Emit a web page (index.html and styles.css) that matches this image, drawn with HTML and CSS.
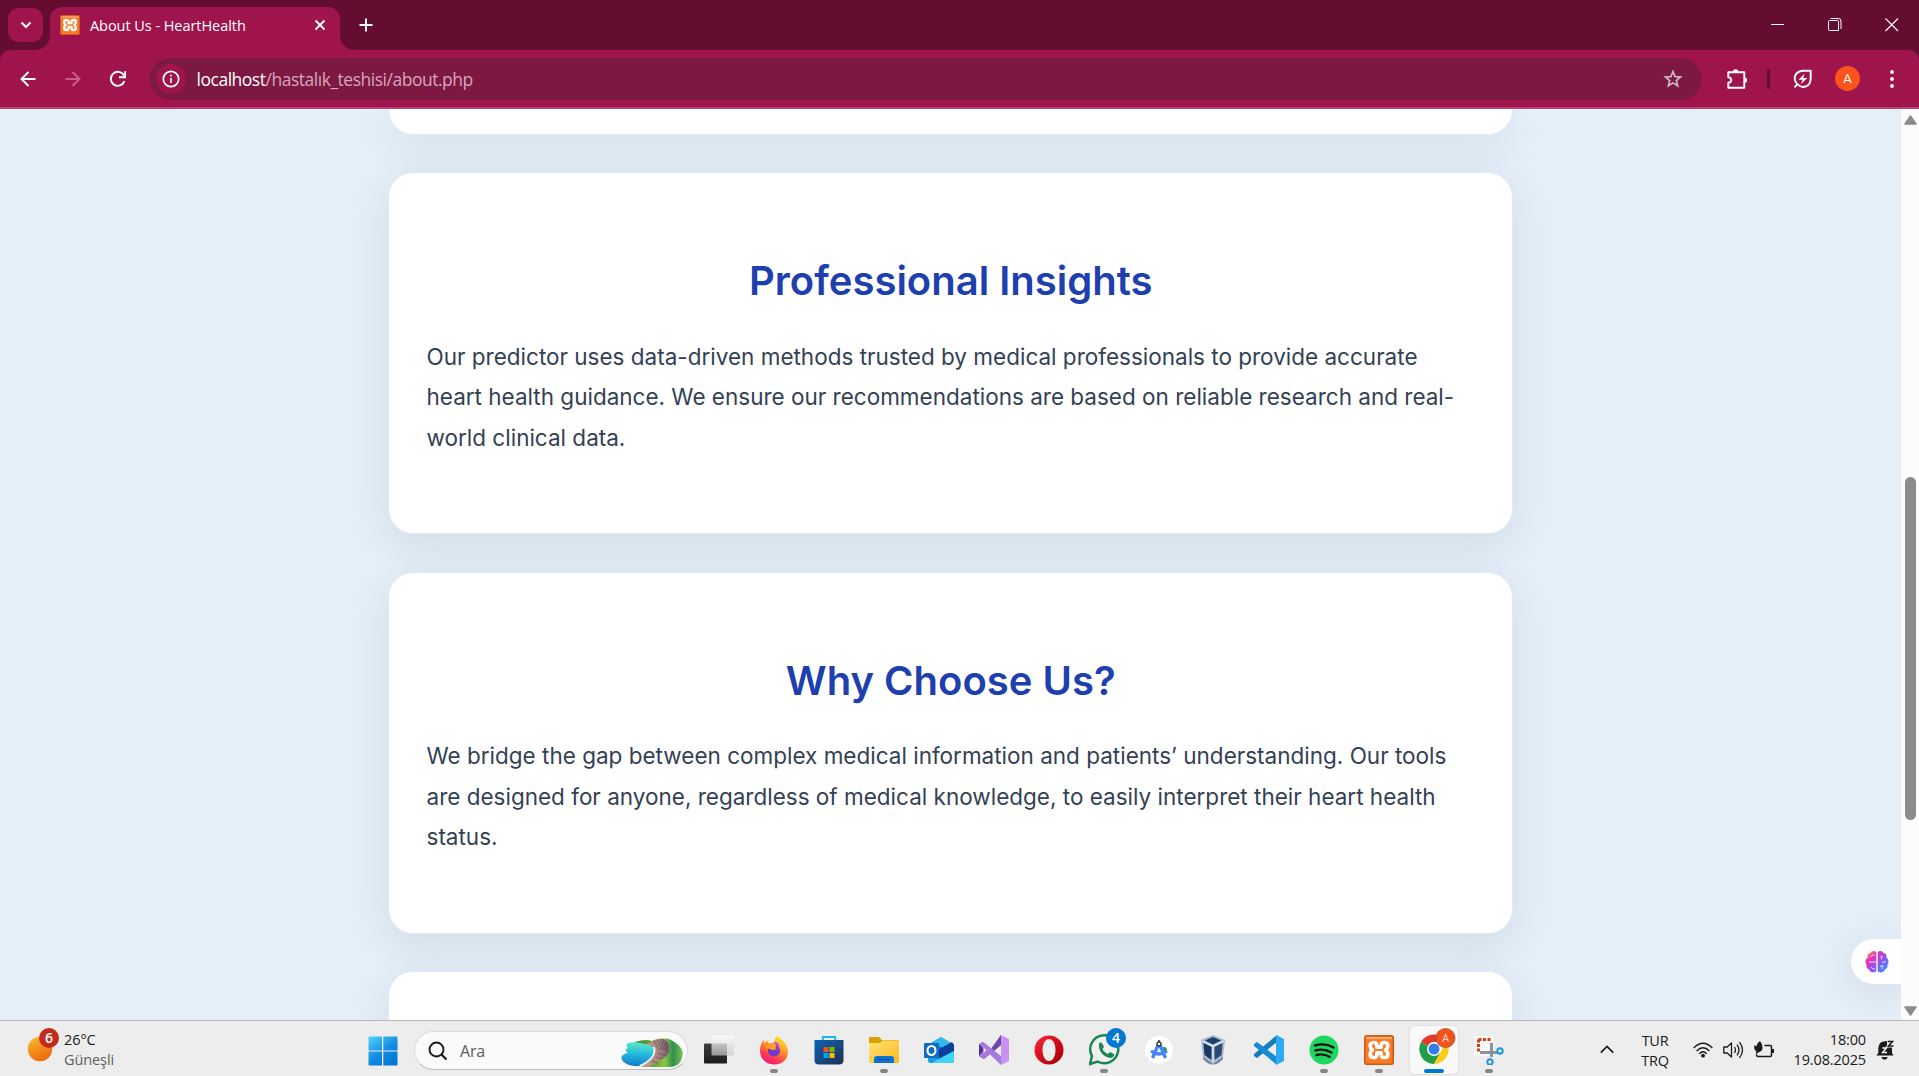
FILE: index.html
```html
<!DOCTYPE html>
<html lang="en">
<head>
<meta charset="utf-8">
<title>About Us - HeartHealth</title>
<link rel="stylesheet" href="styles.css">
</head>
<body>
<header class="browser">
  <div class="tabstrip">
    <button class="tab-search" aria-label="Search tabs"><svg width="12" height="8" viewBox="0 0 12 8"><path d="M1.500 1.500 6 6l4.500-4.500" fill="none" stroke="#fff" stroke-width="2"/></svg></button>
    <div class="tab">
      <svg class="favicon" width="20" height="20" viewBox="0 0 30 30"><use href="#xampp"/></svg>
      <span class="tab-title">About Us - HeartHealth</span>
      <svg class="tab-close" width="12" height="12" viewBox="0 0 12 12"><path d="M1.500 1.500l9 9M10.500 1.500l-9 9" stroke="#fff" stroke-width="1.800"/></svg>
    </div>
    <svg class="new-tab" width="14" height="14" viewBox="0 0 14 14"><path d="M7 .5v13M.5 7h13" stroke="#fff" stroke-width="1.900"/></svg>
    <div class="window-controls">
      <svg width="14" height="14" viewBox="0 0 14 14"><path d="M0 6.500h13" stroke="#fff"/></svg>
      <svg width="14" height="14" viewBox="0 0 14 14"><path d="M.5 3.500q0-1 1-1h8q1 0 1 1v9h-9q-1 0-1-1z" fill="none" stroke="#fff"/><path d="M2.500 .5h8q2.500 0 2.500 2.500v8" fill="none" stroke="#fff"/></svg>
      <svg width="14" height="14" viewBox="0 0 14 14"><path d="M.5 .5l12.500 12.500M13 .5L.5 13" stroke="#fff" stroke-width="1.100"/></svg>
    </div>
  </div>
  <div class="toolbar">
    <svg class="nav back" width="16" height="16" viewBox="0 0 16 16"><path d="M15.500 8H2M8.500 1 1.500 8l7 7" fill="none" stroke="#fff" stroke-width="1.900"/></svg>
    <svg class="nav forward" width="16" height="16" viewBox="0 0 16 16"><path d="M.5 8H14M7.500 1l7 7-7 7" fill="none" stroke="#c9608c" stroke-width="1.900"/></svg>
    <svg class="nav reload" width="18" height="18" viewBox="0 0 18 18"><path d="M15.400 11.200A7 7 0 1 1 15 5.500" fill="none" stroke="#fff" stroke-width="1.900"/><path d="M16.100 1.200v6H10" fill="none" stroke="#fff" stroke-width="1.900"/></svg>
    <div class="omnibox">
      <span class="site-info"><svg width="18" height="18" viewBox="0 0 18 18"><circle cx="9" cy="9" r="7.700" fill="none" stroke="#fff" stroke-width="1.700"/><path d="M9 8v5M9 4.700v1.800" stroke="#fff" stroke-width="1.600"/></svg></span>
      <span class="url"><b>localhost</b>/hastalık_teshisi/about.php</span>
      <svg class="star" width="20" height="20" viewBox="0 0 20 20"><path d="M10 2.500l2.050 5.100 5.500.4-4.250 3.500 1.350 5.300L10 13.900l-4.650 2.900 1.350-5.300L2.450 8l5.500-.4z" fill="none" stroke="#cfb6c4" stroke-width="1.700"/></svg>
    </div>
    <svg class="puzzle" width="22" height="22" viewBox="0 0 22 22"><path d="M3 4.300h15.300v15.500H2.300v-5c4-.5 4-5 0-5.500V4.300z" fill="none" stroke="#fff" stroke-width="1.900" stroke-linejoin="round"/><path d="M6.900 4a2.800 2.800 0 0 1 5.600 0zM18.500 9.400a2.600 2.600 0 0 1 0 5.300z" fill="#fff"/></svg>
    <i class="divider"></i>
    <svg class="leaf" width="20" height="20" viewBox="0 0 20 20"><path d="M1.500 18.300l2.700-3C-1 9 2.500 1.800 11 1.800h6.700V9c0 9-8 11.500-13.300 6.200" fill="none" stroke="#fff" stroke-width="1.900" stroke-linejoin="round"/><path d="M11.500 4.700 5.500 10.700h4L8 15l6.300-6h-4.200z" fill="#fff"/></svg>
    <span class="avatar">A</span>
    <svg class="menu-dots" width="4" height="18" viewBox="0 0 4 18"><g fill="#fff"><circle cx="2" cy="2" r="1.900"/><circle cx="2" cy="9" r="1.900"/><circle cx="2" cy="16" r="1.900"/></g></svg>
  </div>
</header>

<div class="viewport">
  <main class="page">
    <section class="card card-leaving"></section>
    <section class="card">
      <h2>Professional Insights</h2>
      <p>Our predictor uses data-driven methods trusted by medical professionals to provide accurate heart health guidance. We ensure our recommendations are based on reliable research and real-world clinical data.</p>
    </section>
    <section class="card">
      <h2>Why Choose Us?</h2>
      <p>We bridge the gap between complex medical information and patients’ understanding. Our tools are designed for anyone, regardless of medical knowledge, to easily interpret their heart health status.</p>
    </section>
    <section class="card card-entering"></section>
    <aside class="assistant">
      <svg width="24" height="24" viewBox="0 0 24 24"><defs><linearGradient id="brain" x1="0" y1="0" x2="1" y2="1"><stop offset=".05" stop-color="#ffa62b"/><stop offset=".28" stop-color="#ee31b8"/><stop offset=".6" stop-color="#8a55f5"/><stop offset="1" stop-color="#1ba8ff"/></linearGradient></defs><path d="M11.300 2.500C10 .3 6.500.5 5.500 3 3 3 2 5.500 2.700 7.500.2 9-.2 13 1.500 14.500 1 17 2.500 19 4 19.500c1 3 5.500 4 7.300 1.500zM12.700 2.500C14 .3 17.500.5 18.500 3c2.500 0 3.500 2.500 2.800 4.500 2.500 1.500 2.900 5.500 1.200 7 .5 2.500-1 4.500-2.500 5-1 3-5.500 4-7.300 1.500z" fill="url(#brain)"/><path d="M4 12h7M6 7q1-2.500 4-2M6 17q1 2.500 4 2M15 6l1.500 1.500L18 6M16.500 7.500v2M17 12l2 .5L21 11M15 16h4M17 16v3" fill="none" stroke="#fff" stroke-width=".8"/></svg>
    </aside>
  </main>
  <div class="scrollbar">
    <svg width="13" height="10" viewBox="0 0 13 10"><path d="M6.500 1 12 9H1z" fill="#8b8b8b" stroke="#8b8b8b" stroke-width="1.500" stroke-linejoin="round"/></svg>
    <i class="thumb"></i>
    <svg class="down" width="13" height="10" viewBox="0 0 13 10"><path d="M6.500 9 12 1H1z" fill="#8b8b8b" stroke="#8b8b8b" stroke-width="1.500" stroke-linejoin="round"/></svg>
  </div>
</div>

<footer class="taskbar">
  <div class="weather">
    <svg width="32" height="35" viewBox="0 0 32 35"><defs><linearGradient id="sun" x1=".2" y1="0" x2=".7" y2="1"><stop stop-color="#efbd2c"/><stop offset=".7" stop-color="#f27c16"/><stop offset="1" stop-color="#ef660a"/></linearGradient></defs><circle cx="13" cy="21" r="12.200" fill="url(#sun)"/><circle cx="22" cy="10" r="10" fill="#c42b1c"/><text x="22" y="14.700" text-anchor="middle" class="badge-text">6</text></svg>
    <div class="weather-text"><span>26°C</span><span class="muted">Güneşli</span></div>
  </div>
  <svg class="start" width="30" height="30" viewBox="0 0 30 30"><defs><linearGradient id="win" x1="0" y1="0" x2=".7" y2="1"><stop stop-color="#55d3ff"/><stop offset=".6" stop-color="#128be0"/><stop offset="1" stop-color="#0078d4"/></linearGradient></defs><path d="M1.500.5H14v14H.5v-13q0-1 1-1zM15.300.5h13.200q1 0 1 1v13H15.300zM.5 15.500H14v14H1.500q-1 0-1-1zM15.300 15.500h14.200v13q0 1-1 1H15.300z" fill="url(#win)"/></svg>
  <div class="search">
    <svg width="20" height="20" viewBox="0 0 20 20"><circle cx="8.500" cy="8.500" r="7" fill="none" stroke="#1c1c1c" stroke-width="1.900"/><path d="M13.500 13.500l5 5" stroke="#1c1c1c" stroke-width="2.300"/></svg>
    <span>Ara</span>
    <svg class="scene" width="62" height="30" viewBox="0 0 62 30"><defs><linearGradient id="sea" x1=".4" y1="0" x2=".3" y2="1"><stop stop-color="#5fe8c4"/><stop offset=".45" stop-color="#24bcde"/><stop offset="1" stop-color="#1479c6"/></linearGradient><linearGradient id="hill"><stop stop-color="#3a8436"/><stop offset=".5" stop-color="#77b53a"/><stop offset=".62" stop-color="#8cc540"/><stop offset=".8" stop-color="#2f8f4f"/><stop offset="1" stop-color="#7cc257"/></linearGradient><linearGradient id="rock"><stop stop-color="#c9a08d"/><stop offset=".6" stop-color="#ab8680"/><stop offset="1" stop-color="#735c6c"/></linearGradient></defs><path d="M14 4C21 2 26 1 31 3 38 0 46 0 50 2c8 4 13 10 11.500 15-.5 8-6 12-13 12H24z" fill="url(#hill)"/><path d="M22 7C31 5 34 0 42 1c6 1 7 8 6 13-2 6-10 8-17 13l-3 2h-8z" fill="url(#rock)"/><path d="M33 3l5 9M36 2l5 10M39 1l4 11M42 1l3 12M45 3l1 11M37 15l8 3M35 19l7 2M31 23l6 2" stroke="#5b4450" stroke-width=".6"/><path d="M7 5C15 3 25 6 33 9c3 7-2 14-13 19C9 29 0 25 .5 19 2 16 5 15 7 15 4 13 4 11 7 10 5 8 5 7 7 5z" fill="url(#sea)"/><path d="M33 9c2 7-3 14-14 19" fill="none" stroke="#eaf4f5" stroke-width="2"/></svg>
  </div>
  <nav class="apps">
    <span class="app"><svg width="30" height="30" viewBox="0 0 30 30"><defs><linearGradient id="dark" x1="0" y1="0" x2="0" y2="1"><stop stop-color="#3d3d3c"/><stop offset="1" stop-color="#1b1b1b"/></linearGradient><linearGradient id="pane" x1="0" y1="0" x2="0" y2="1"><stop stop-color="#fdfdfd" stop-opacity=".85"/><stop offset="1" stop-color="#c8c8c8" stop-opacity=".7"/></linearGradient></defs><rect y="8.500" width="23" height="20" rx="1" fill="url(#dark)"/><rect x="7.500" y=".5" width="22.500" height="20" rx="1" fill="url(#pane)"/></svg></span>
    <span class="app open"><svg width="30" height="30" viewBox="0 0 30 30"><defs><linearGradient id="fox" x1=".8" y1="0" x2=".3" y2="1"><stop stop-color="#fff04b"/><stop offset=".4" stop-color="#ff9b23"/><stop offset=".75" stop-color="#ff3c50"/><stop offset="1" stop-color="#ec1289"/></linearGradient></defs><path d="M18.500 1c6 4 10.500 9 10.500 16 0 8-6.500 12.500-14 12.500S1 24 1 16C1 12 2 8 4.500 5l1.300 3C7 6.500 8 6 9.500 5.500L9 8l6 1c0-4 1-6.500 3.500-8z" fill="url(#fox)"/><circle cx="15" cy="15.500" r="6" fill="#6c3bcb"/><path d="M10 9c3-2 8-2 10 2-3-1-4 1-3 3-2 2-5 1-6 0l-6-2z" fill="#ff9d25"/><path d="M15 7c6 0 7 8 2 9 3-4 0-6-2-9z" fill="#a545e9"/></svg></span>
    <span class="app"><svg width="30" height="30" viewBox="0 0 30 30"><defs><linearGradient id="store" x1="0" y1="0" x2=".8" y2="1"><stop stop-color="#0a65b3"/><stop offset="1" stop-color="#20335c"/></linearGradient></defs><path d="M8.800 6V2h12.400v4" fill="none" stroke="#20b7ed" stroke-width="1.900"/><path d="M.5 5h29v20q0 4.500-4.500 4.500H5q-4.500 0-4.500-4.500z" fill="url(#store)"/><path d="M9.500 12h5v5h-5z" fill="#f25022"/><path d="M15.500 12h5v5h-5z" fill="#7fba00"/><path d="M9.500 18h5v5h-5z" fill="#00a4ef"/><path d="M15.500 18h5v5h-5z" fill="#ffb900"/></svg></span>
    <span class="app open"><svg width="30" height="30" viewBox="0 0 30 30"><defs><linearGradient id="folder" x1="0" y1="0" x2="1" y2="1"><stop stop-color="#ffe27a"/><stop offset="1" stop-color="#fcb918"/></linearGradient></defs><path d="M0 3q0-1 1-1h9l3 3h16q1 0 1 1v8H0z" fill="#dba100"/><path d="M0 8h11l2.500-2.500H30V27q0 1-1 1H1q-1 0-1-1z" fill="url(#folder)"/><path d="M5 28v-4q0-3 3-3h14q3 0 3 3v4z" fill="#0b73d1"/><path d="M9 24.500h12" stroke="#07468c" stroke-width="1.200" stroke-linecap="round"/></svg></span>
    <span class="app"><svg width="30" height="30" viewBox="0 0 30 30"><path d="M4 10 17 2l13 8v16q0 2-2 2H7q-3 0-3-3z" fill="#1687de"/><path d="M17 2l13 8-7 5-14-8z" fill="#35b8ee"/><path d="M15 14l13-7 2 3v6l-15 8z" fill="#073f9b"/><path d="M7 28l23-12v10q0 2-2 2z" fill="#42d3f8"/><path d="M4 19l10 5-6 4q-4 0-4-4z" fill="#199ee5"/><rect y="8" width="15" height="15" rx="1" fill="#0f6cc5"/><ellipse cx="7.500" cy="15.500" rx="4" ry="4.500" fill="none" stroke="#fff" stroke-width="2.100"/></svg></span>
    <span class="app"><svg width="30" height="30" viewBox="0 0 30 30"><path d="M0 9l4-2 8 7 10-14v10L5 24l-5-3z" fill="#8460bd"/><path d="M0 9l5 6-5 6z" fill="#54308e"/><path d="M12 14l10-14v10l-7 6z" fill="#6d49a9"/><path d="M4 7 22 21v9L0 9z" fill="#a57bdd"/><path d="M0 21l4 3 9-8-4-4z" fill="#a978df"/><path d="M4.500 12.500v5.500l3-2.800z" fill="#ededed"/><path d="M22 0l8 4v22l-8 4z" fill="#c991f4"/></svg></span>
    <span class="app"><svg width="30" height="30" viewBox="0 0 30 30"><defs><linearGradient id="opera" x1="0" y1="0" x2="1" y2="1"><stop stop-color="#ff2739"/><stop offset=".5" stop-color="#d20c1a"/><stop offset="1" stop-color="#9c0000"/></linearGradient></defs><path fill-rule="evenodd" d="M15 .5a14.500 14.500 0 1 1 0 29 14.500 14.500 0 0 1 0-29zM15 4C11 4 8.500 9 8.500 15S11 26 15 26s6.500-5 6.500-11S19 4 15 4z" fill="url(#opera)"/></svg></span>
    <span class="app open"><svg class="overhang" width="38" height="38" viewBox="0 0 38 38"><path d="M1 36l2-8a14 14 0 1 1 5.500 5.500z" fill="#f0f0f0" stroke="#1b8755" stroke-width="2.500"/><path d="M10 16c1-2 3-2 4 1l1 2-1.500 2c1.500 3 3.500 4 5.500 5l2-2 4 2c1 2-2 4-4 4-7-1-12-8-11-14z" fill="#1b8755"/><circle cx="27" cy="10" r="10" fill="#0078d4"/><text x="27" y="15" text-anchor="middle" class="badge-text">4</text></svg></span>
    <span class="app"><svg width="30" height="30" viewBox="0 0 30 30"><circle cx="15" cy="15" r="13.500" fill="#fff" stroke="#fff" stroke-width="1.500" stroke-dasharray="3 2"/><circle cx="20" cy="15" r="3" fill="#2d9f50"/><path d="M15 8 8.500 23M15 8l6.500 15M7 16q8 6 16 0" fill="none" stroke="#4285f4" stroke-width="3.300"/><path d="M15 5v4" stroke="#333" stroke-width="1.500"/><circle cx="15" cy="9" r="2" fill="#fff" stroke="#333" stroke-width="1.300"/></svg></span>
    <span class="app vbox"><svg width="30" height="30" viewBox="0 0 30 30"><path d="M5 20l10 9 10-9v4q-10 11-20 0z" fill="#777f93"/><path d="M15 0l12 5-2 17-10 7-10-7L3 5z" fill="#a7b9d2"/><path d="M15 2l8 3.500-8 4-8-4z" fill="#203d67"/><path d="M5.500 8l8 4v13l-7-5z" fill="#19375f"/><path d="M24.500 8l-8 4v13l7-5z" fill="#2b4971"/><path d="M4 6l11 5 11-5M15 11v16" fill="none" stroke="#e8f0f8" stroke-width="1.200"/></svg></span>
    <span class="app"><svg width="30" height="30" viewBox="0 0 30 30"><path d="M0 21l3 2L23 7V0L0 19z" fill="#157bbf"/><path d="M0 9l3-2 20 15v8L0 11z" fill="#198bd0"/><path d="M22 0l8 4v22l-8 4z" fill="#2cabf2"/></svg></span>
    <span class="app open"><svg width="30" height="30" viewBox="0 0 30 30"><circle cx="15" cy="15" r="14.500" fill="#1ed760"/><path d="M6 10.500q10-3 18.500 2M6.500 15.500q8-2.500 16 2M7.500 20q7-1.800 13 1.800" fill="none" stroke="#111" stroke-width="2.400" stroke-linecap="round"/></svg></span>
    <span class="app open"><svg width="30" height="30" viewBox="0 0 30 30"><g id="xampp"><rect x=".8" y=".8" width="28.400" height="28.400" rx="2" fill="#fb7a24" stroke="#c95b1b" stroke-width="1.600"/><path d="M2 2h26v2H2z" fill="#ffab70"/><path d="M12.800 12.200V10c0-3.500-6.600-3.500-6.600.5 0 2 .8 3.500 2.300 4.500-1.500 1-2.300 2.500-2.300 4.500 0 4 6.600 4 6.600.5v-2.200h4.400V20c0 3.500 6.600 3.500 6.600-.5 0-2-.8-3.500-2.300-4.500 1.500-1 2.300-2.500 2.300-4.500 0-4-6.600-4-6.600-.5v2.200z" fill="none" stroke="#fff" stroke-width="3.600" stroke-linejoin="round"/></g></svg></span>
    <span class="app open active"><svg class="overhang" width="38" height="38" viewBox="0 0 38 38"><path d="M15 21 2 14a15 15 0 0 1 26 0H15z" fill="#e33b2e"/><path d="M2 14a15 15 0 0 0 13 22l6.500-11L15 21z" fill="#229d4b"/><path d="M28 14a15 15 0 0 1-13 22l7-13z" fill="#fdcc19"/><circle cx="15" cy="21" r="7" fill="#fff"/><circle cx="15" cy="21" r="5.500" fill="#347de9"/><circle cx="26.500" cy="10" r="9.600" fill="#f4511e" stroke="#96542b" stroke-width=".7"/><text x="26.500" y="14" text-anchor="middle" class="profile-text">A</text></svg></span>
    <span class="app open"><svg width="30" height="30" viewBox="0 0 30 30"><rect x="0" y="1" width="20" height="20" fill="#f8f8f8"/><path d="M4.500 4.500h13M4.500 4.500v12" fill="none" stroke="#d83b16" stroke-width="3" stroke-dasharray="3 1.500"/><path d="M17.500 8v14M6 17.500h18" stroke="#8a929a" stroke-width="3"/><circle cx="26" cy="16" r="2.700" fill="none" stroke="#1697dd" stroke-width="1.900"/><circle cx="16" cy="27" r="2.700" fill="none" stroke="#1697dd" stroke-width="1.900"/></svg></span>
  </nav>
  <div class="tray">
    <svg class="chevron" width="14" height="9" viewBox="0 0 14 9"><path d="M.8 7.700 7 1.500l6.200 6.200" fill="none" stroke="#1b1b1b" stroke-width="1.700"/></svg>
    <div class="lang"><span>TUR</span><span>TRQ</span></div>
    <div class="status">
      <svg width="20" height="16" viewBox="0 0 20 16"><path d="M.7 6q9.300-9.500 18.600 0M3.600 9q6.400-6.500 12.800 0M6.300 11.700q3.700-3.800 7.400 0" fill="none" stroke="#1b1b1b" stroke-width="1.400"/><circle cx="10" cy="13.700" r="1.900" fill="#1b1b1b"/></svg>
      <svg width="21" height="18" viewBox="0 0 21 18"><path d="M.8 6h3.400L8.500 2v14l-4.300-4H.8zM11.500 6q2 3 0 6M14 3.700q4 5.300 0 10.600M16.500 1.200q6 7.800 0 15.600" fill="none" stroke="#1b1b1b" stroke-width="1.300" stroke-linejoin="round"/></svg>
      <svg width="20" height="17" viewBox="0 0 20 17"><path d="M10.500 4.500h5.700q1.300 0 1.300 1.300v8.400q0 1.300-1.300 1.300H4q-1.500 0-1.500-2" fill="none" stroke="#1b1b1b" stroke-width="1.500"/><path d="M18 8h2v4h-2zM6 0q2.500 3 2.500 6.500 0 3.500-3 4.500-2 .3-2.800 2.300l-1-1 .8-1.800Q-.8 8 .5 4L2 5.500q1-3.500 4-5.500z" fill="#1b1b1b"/></svg>
    </div>
    <div class="clock"><span>18:00</span><span>19.08.2025</span></div>
    <svg class="bell" width="18" height="20" viewBox="0 0 18 20"><path d="M.3 15.500 2.300 13V8Q2.800 1.500 9 1.200L11 1v4l5 2.500V13l1.500 2.500zM5.300 17h6.500q-.8 2.700-3.300 2.700T5.300 17z" fill="#1b1b1b"/><path d="M6.300 8h4.200l-4 4.500h4.500" fill="none" stroke="#fff" stroke-width="1.300"/><path d="M11.800 1.500h4.700l-4 4.500h5" fill="none" stroke="#ededed" stroke-width="3"/><path d="M11.800 1.500h4.700l-4 4.500h5" fill="none" stroke="#1b1b1b" stroke-width="1.500"/></svg>
  </div>
</footer>
</body>
</html>
```
FILE: styles.css
```css
* { box-sizing: border-box; }
body {
  margin: 0;
  width: 1919px;
  height: 1076px;
  display: flex;
  flex-direction: column;
  overflow: hidden;
  font-family: "Open Sans", "Noto Sans", sans-serif;
}
svg { display: block; flex: none; }

/* Browser frame */
.browser { height: 109px; background: #650d31; flex: none; }
.tabstrip { height: 50px; display: flex; align-items: center; padding-left: 8px; }
.tab-search {
  position: relative; z-index: 1;
  width: 35px; height: 34px; padding: 0; border: 0; border-radius: 11px;
  background: #a0144e; display: grid; place-items: center;
}
.tab {
  position: relative;
  width: 290px; height: 43px; margin: 7px 0 0 7px; padding: 0 14px 7px 10px;
  display: flex; align-items: center;
  background: #a0144e; border-radius: 12px 12px 0 0;
}
.tab::before, .tab::after {
  content: ""; position: absolute; bottom: 0; width: 14px; height: 14px;
}
.tab::before { left: -14px; background: radial-gradient(circle at 0 0, #650d31 13.5px, #a0144e 14px); }
.tab::after { right: -14px; background: radial-gradient(circle at 100% 0, #650d31 13.5px, #a0144e 14px); }
.tab-title { margin-left: 10px; font-size: 14.5px; letter-spacing: -.05px; color: #fff; white-space: nowrap; }
.tab-close { margin-left: auto; }
.new-tab { margin-left: 19px; }
.window-controls { display: flex; gap: 43px; margin: 0 20.5px 1px auto; }
.toolbar {
  height: 59px; display: flex; align-items: center; padding: 0 25px 0 20px;
  background: #a0144e; border-bottom: 2px solid #b94272; border-radius: 10px 10px 0 0;
}
.forward { margin-left: 29px; }
.reload { margin-left: 28px; }
.omnibox {
  height: 42px; width: 1552px; margin-left: 23px; padding: 0 19px 0 6px;
  display: flex; align-items: center; border-radius: 21px; background: #7d1842;
}
.site-info { width: 30px; height: 30px; display: grid; place-items: center; border-radius: 50%; background: #a0144e; }
.url { margin-left: 10.5px; padding-top: 1px; font-size: 17.5px; letter-spacing: -.48px; color: #d6a6bb; white-space: nowrap; }
.url b { font-weight: 400; color: #fff; }
.star { margin-left: auto; }
.puzzle { margin-left: 24px; }
.divider { width: 3px; height: 20px; margin-left: 19px; border-radius: 1px; background: #650d31; }
.leaf { margin-left: 23px; }
.avatar {
  width: 25px; height: 25px; margin-left: 22px; border-radius: 50%; background: #fa541c;
  color: #fff; font: 13px/25px Roboto, sans-serif; text-align: center;
}
.menu-dots { margin-left: auto; }

/* Page */
.viewport { height: 911px; display: flex; flex: none; }
.page {
  position: relative; width: 1901px; height: 911px; overflow: hidden;
  display: flex; flex-direction: column; align-items: center; gap: 37.5px;
  background: #e5effa;
}
.card {
  flex: none; width: 1125px; height: 362px; padding: 72px 37px 0 37.5px;
  background: #fff; border: 1px solid #dbeafe; border-radius: 25px;
  box-shadow: 0 12px 44px rgba(20, 40, 0, .095);
  font-family: Inter, sans-serif;
}
.card-leaving { height: 25.7px; padding: 0; border-top: 0; border-radius: 0 0 25px 25px; box-shadow: 0 12px 44px rgba(20, 40, 0, .095), 0 -40px 44px rgba(20, 40, 0, .06); }
.card h2 { margin: 0 0 19.5px; font-size: 40px; line-height: 72px; font-weight: 600; text-align: center; color: #1e40af; }
.card p { margin: 0; font-size: 22.5px; line-height: 40.5px; color: #334155; }
.assistant {
  position: absolute; right: 0; top: 830px; width: 50px; height: 45px;
  display: flex; align-items: center; padding-left: 13.5px;
  background: #fff; border-radius: 23px 0 0 23px; box-shadow: 0 8px 40px rgba(0, 0, 0, .1);
}
.scrollbar {
  width: 18px; padding: 6px 2px 4px 3px; background: #fcfcfc;
  display: flex; flex-direction: column; align-items: center;
}
.thumb { width: 11px; height: 343px; margin-top: 352px; border-radius: 6px; background: #8b8b8b; }
.down { margin-top: auto; }

/* Taskbar */
.taskbar {
  position: relative; height: 56px; flex: none; display: flex; align-items: center;
  background: #ededed; border-top: 1px solid #b7b9bd; color: #1b1b1b;
}
.weather { width: 340px; padding-left: 27px; display: flex; align-items: center; height: 55px; }
.weather svg { margin-bottom: 6px; }
.weather-text { display: flex; flex-direction: column; margin: 2px 0 0 5px; font-size: 14.5px; line-height: 20px; letter-spacing: -.1px; }
.muted { color: #606060; }
.badge-text { font: 600 14px "Open Sans", sans-serif; fill: #fff; }
.profile-text { font: 11px Roboto, sans-serif; fill: #ffd9cc; }
.start { margin: 4px 0 0 28px; }
.search {
  width: 274px; height: 39px; margin: 4px 3px 0 16px; padding: 0 3px 0 13px;
  display: flex; align-items: center; background: #fafafa;
  border: 1px solid #dcdcdc; border-bottom-color: #bcbcbc; border-radius: 20px;
}
.search span { margin-left: 12px; padding-top: 1px; font-size: 16px; letter-spacing: -.2px; color: #5c5c5c; }
.scene { margin: 4px 1px 0 auto; }
.apps { display: flex; padding-top: 2px; }
.app {
  position: relative; width: 48px; height: 48px; margin: 0 3.5px;
  display: grid; place-items: center; padding-top: 1px; border-radius: 5px;
}
.app.active { background: #f9f9f9; box-shadow: 0 0 0 1px #e1e1e1; }
.vbox { left: -1px; }
.app.open::after {
  content: ""; position: absolute; bottom: 1px; left: 20px; width: 8px; height: 4px;
  border-radius: 2px; background: #868686;
}
.app.active::after { left: 14px; width: 20px; background: #0078d4; }
.overhang { margin: -7px 0 0 8px; }
.tray { margin-left: auto; height: 55px; padding: 2px 25px 0 0; display: flex; align-items: center; font-size: 14.5px; line-height: 20px; letter-spacing: -.3px; }
.lang, .clock { display: flex; flex-direction: column; }
.lang { width: 40px; margin-left: 21px; text-align: center; align-items: center; padding-top: 2px; }
.status { display: flex; align-items: center; gap: 10px; margin-left: 18px; }
.clock { width: 90px; margin-left: 2px; align-items: flex-end; letter-spacing: -.15px; }
.bell { margin-left: 10px; }
```
